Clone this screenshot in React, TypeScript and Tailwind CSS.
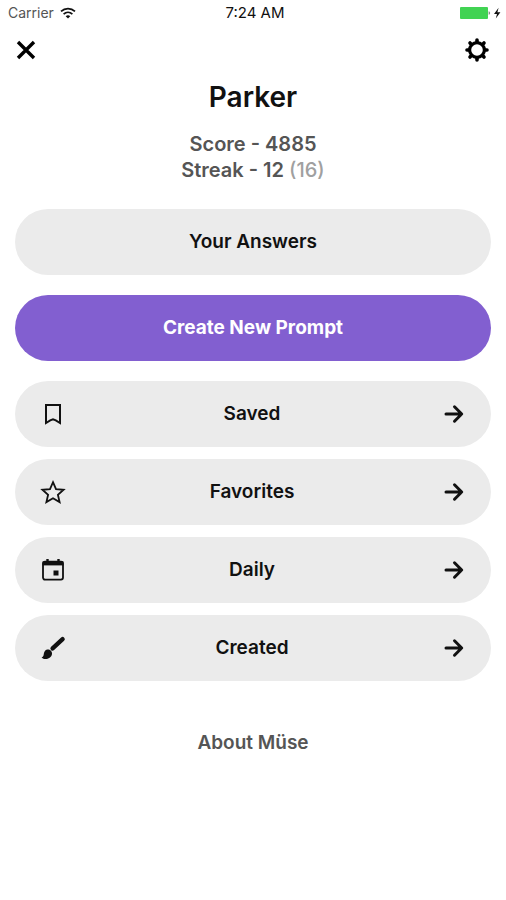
import { useState } from 'react'

const user = { name: 'Parker', score: 4885, streak: 12, best: 16 }

const WifiIcon = () => (
  <svg width="16" height="12" viewBox="0 0 16 12" fill="none" stroke="#111" strokeWidth="1.7">
    <path d="M1 4.4C5 .6 11 .6 15 4.4" />
    <path d="M3.6 7.1c2.6-2.4 6.2-2.4 8.8 0" />
    <path d="M8 11.6 5.7 9.2c1.3-1.2 3.3-1.2 4.6 0z" fill="#111" stroke="none" />
  </svg>
)

const BatteryIcon = () => (
  <svg width="42" height="14" viewBox="0 0 42 14">
    <rect x="0" y="1" width="28" height="12" rx="1" fill="#41d353" />
    <path d="M28.6 5.2c2 .3 2 3.3 0 3.6z" fill="#888" />
    <path d="M38.6 1.8 34 8h3l-1.2 4.4L40.4 6.2h-3z" fill="#111" />
  </svg>
)

const CloseIcon = () => (
  <svg width="20" height="20" viewBox="0 0 20 20" stroke="#000" strokeWidth="3.4">
    <path d="m2 2 16 16M18 2 2 18" />
  </svg>
)

const GearIcon = () => (
  <svg width="24" height="24" viewBox="0 0 24 24" fill="none" stroke="#000">
    <circle cx="12" cy="12" r="7.4" strokeWidth="3.2" />
    <path
      d="M12 2v2M12 20v2M2 12h2M20 12h2M5 5l1.4 1.4M17.6 17.6 19 19M19 5l-1.4 1.4M6.4 17.6 5 19"
      strokeWidth="3.6" strokeLinecap="round"
    />
  </svg>
)

const BookmarkIcon = () => (
  <svg width="26" height="26" viewBox="0 0 26 26" fill="none" stroke="#111" strokeWidth="2">
    <path d="M6 4h14v18l-4.2-2.6-2.8-1-2.8 1L6 22z" />
  </svg>
)

const StarIcon = () => (
  <svg width="26" height="26" viewBox="0 0 26 26" fill="none" stroke="#111" strokeWidth="1.8">
    <path d="m13 3.2 3 6.9 7.6.7-5.7 5 1.7 7.3-6.6-3.8-6.6 3.8 1.7-7.3-5.7-5 7.6-.7z" />
  </svg>
)

const CalendarIcon = () => (
  <svg width="26" height="26" viewBox="0 0 26 26" fill="none" stroke="#111">
    <rect x="3" y="4.6" width="20" height="18" rx="2" strokeWidth="1.8" />
    <path d="M2.6 6.4h20.8" strokeWidth="4" />
    <path d="M7.5 2v3M18.5 2v3" strokeWidth="2.4" />
    <rect x="13.5" y="13.5" width="5" height="5" fill="#111" stroke="none" />
  </svg>
)

const BrushIcon = () => (
  <svg width="26" height="26" viewBox="0 0 26 26" fill="#111">
    <path d="M12.6 13.4 22.6 4.2" stroke="#111" strokeWidth="4.4" strokeLinecap="round" />
    <path d="M7.2 14.6c2.6-.4 5.2 1.8 4.8 4.4-.5 3.6-4 5.2-7 5-1.4-.1-2.7-.7-3.4-1.6 1.4-.4 2-1.2 2.1-2.8.2-2.6 1.4-4.7 3.5-5z" />
  </svg>
)

const ArrowIcon = () => (
  <svg width="20" height="20" viewBox="0 0 20 20" fill="none" stroke="#111" strokeWidth="3" strokeLinecap="round" strokeLinejoin="round">
    <path d="M2 10h15.5M10.5 2.8l7.2 7.2-7.2 7.2" />
  </svg>
)

const links = [
  { id: 'saved', label: 'Saved', icon: <BookmarkIcon /> },
  { id: 'favorites', label: 'Favorites', icon: <StarIcon /> },
  { id: 'daily', label: 'Daily', icon: <CalendarIcon /> },
  { id: 'created', label: 'Created', icon: <BrushIcon /> },
]

export default function App() {
  const [, setPage] = useState('profile')

  return (
    <div className="min-h-screen bg-white font-['Inter',sans-serif] text-[#111]">
      <div className="grid h-[26px] grid-cols-3 items-center px-2">
        <span className="flex items-center gap-1.5 text-sm text-[#555]">Carrier <WifiIcon /></span>
        <span className="pl-1 text-center text-[15px]">7:24 AM</span>
        <span className="-mr-1 flex justify-end"><BatteryIcon /></span>
      </div>

      <header className="flex h-12 items-center justify-between pl-4 pr-[17px]">
        <button aria-label="Close" onClick={() => setPage('home')}><CloseIcon /></button>
        <button aria-label="Settings" onClick={() => setPage('settings')}><GearIcon /></button>
      </header>

      <main className="px-[15px] text-center text-[19px] font-semibold">
        <h1 className="mt-[5px] text-[28px] leading-9">{user.name}</h1>
        <div className="mt-4 text-xl leading-[26px] text-[#555]">
          <p>Score - {user.score}</p>
          <p>Streak - {user.streak} <span className="font-medium text-[#a0a0a0]">({user.best})</span></p>
        </div>

        <div className="mt-[26px] flex flex-col gap-5">
          <button className="h-[66px] rounded-full bg-[#ebebeb]" onClick={() => setPage('answers')}>Your Answers</button>
          <button className="h-[66px] rounded-full bg-[#825fd0] font-bold text-white" onClick={() => setPage('create')}>Create New Prompt</button>
          <nav className="flex flex-col gap-3">
            {links.map((l) => (
              <button key={l.id} onClick={() => setPage(l.id)}
                className="grid h-[66px] grid-cols-[26px_1fr_26px] items-center rounded-full bg-[#ebebeb] pl-[25px] pr-[27px]">
                {l.icon}
                <span>{l.label}</span>
                <span className="flex justify-end"><ArrowIcon /></span>
              </button>
            ))}
          </nav>
        </div>

        <a href="#about" className="mt-12 inline-block leading-7 text-[#555]">About Müse</a>
      </main>
    </div>
  )
}
